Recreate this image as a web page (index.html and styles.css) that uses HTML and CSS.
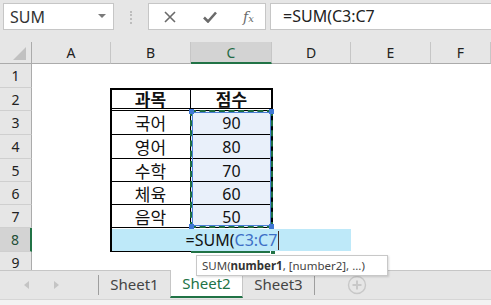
FILE: index.html
```html
<!DOCTYPE html>
<html>
<head>
<meta charset="utf-8">
<link rel="stylesheet" href="styles.css">
</head>
<body>
<div class="app">
  <div class="toolbar">
    <div class="namebox">
      <span class="name">SUM</span>
      <svg class="dd" width="8" height="5" viewBox="0 0 8 5"><path d="M0 0H8L4 4Z" fill="#7a7a7a"/></svg>
    </div>
    <div class="grip"></div>
    <div class="fxbtns">
      <svg width="12" height="12" viewBox="0 0 12 12"><path d="M1 1L11 11M11 1L1 11" stroke="#6a6a6a" stroke-width="1.6" fill="none"/></svg>
      <svg width="14" height="12" viewBox="0 0 14 12"><path d="M1 6.5L5 10.5L13 1.5" stroke="#6a6a6a" stroke-width="2.6" fill="none"/></svg>
      <span class="fx"><i>f</i><span class="x">x</span></span>
    </div>
    <div class="formula">=SUM(C3:C7</div>
  </div>

  <div class="sheet">
    <div class="corner"><span class="tri"></span></div>
    <div class="ch">A</div>
    <div class="ch">B</div>
    <div class="ch sel">C</div>
    <div class="ch">D</div>
    <div class="ch">E</div>
    <div class="ch">F</div>

    <div class="rh r1">1</div>
    <div class="rh r2">2</div>
    <div class="rh r3">3</div>
    <div class="rh r4">4</div>
    <div class="rh r5">5</div>
    <div class="rh r6">6</div>
    <div class="rh r7">7</div>
    <div class="rh r8 sel">8</div>
    <div class="rh r9">9</div>

    <div class="cell b r2 head">과목</div>
    <div class="cell c r2 head">점수</div>
    <div class="cell b r3">국어</div>
    <div class="cell c r3 num">90</div>
    <div class="cell b r4">영어</div>
    <div class="cell c r4 num">80</div>
    <div class="cell b r5">수학</div>
    <div class="cell c r5 num">70</div>
    <div class="cell b r6">체육</div>
    <div class="cell c r6 num">60</div>
    <div class="cell b r7">음악</div>
    <div class="cell c r7 num">50</div>

    <div class="frame"></div>
    <div class="range">
      <span class="h tl"></span><span class="h tr"></span><span class="h bl"></span><span class="h br"></span>
    </div>
    <div class="active"><span class="fill"></span></div>
    <div class="editor"><span class="etext">=SUM(<span class="ref">C3:C7</span></span><span class="caret"></span></div>
    <div class="tip">SUM(<b>number1</b>, [number2], ...)</div>
  </div>

  <div class="tabs">
    <div class="nav">
      <svg width="6" height="8" viewBox="0 0 6 8"><path d="M5 0V8L0 4Z" fill="#c4c4c4"/></svg>
      <svg width="6" height="8" viewBox="0 0 6 8"><path d="M1 0V8L6 4Z" fill="#c4c4c4"/></svg>
    </div>
    <div class="vsep"></div>
    <div class="tab">Sheet1</div>
    <div class="tab on">Sheet2</div>
    <div class="tab">Sheet3</div>
    <div class="vsep"></div>
    <div class="add">
      <svg width="20" height="20" viewBox="0 0 20 20"><circle cx="10" cy="10" r="8.5" fill="none" stroke="#c8c8c8" stroke-width="1.4"/><path d="M10 5.5V14.5M5.5 10H14.5" stroke="#c8c8c8" stroke-width="2"/></svg>
    </div>
  </div>
  <div class="status"><span>참조</span><span>접근성: 조사 필요</span></div>
</div>
</body>
</html>
```
FILE: styles.css
```css
* { box-sizing: border-box; }
html, body { margin: 0; padding: 0; }
body {
  width: 491px;
  height: 305px;
  overflow: hidden;
  background: #fff;
  font-family: "Noto Sans", "Noto Sans CJK KR", sans-serif;
  color: #222;
}
.app { width: 491px; height: 305px; display: flex; flex-direction: column; }

/* toolbar */
.toolbar {
  height: 42px;
  flex: none;
  background: #e6e6e6;
  display: flex;
  align-items: flex-start;
  padding-top: 3px;
}
.namebox {
  margin-left: 3px;
  width: 111px;
  height: 27px;
  background: #fff;
  border: 1px solid #c6c6c6;
  display: flex;
  align-items: center;
  padding-left: 6px;
  padding-right: 7px;
}
.name { font-size: 16px; color: #333; flex: 1; line-height: 1; }
.grip {
  width: 2px;
  height: 13px;
  margin: 8px 16px 0 16px;
  border-left: 2px dotted #bdbdbd;
}
.fxbtns {
  width: 118px;
  height: 27px;
  background: #fff;
  border: 1px solid #c6c6c6;
  display: flex;
  align-items: center;
  padding-left: 15px;
  gap: 27px;
}
.fxbtns svg { display: block; }
.fx {
  font-family: "DejaVu Serif", "Liberation Serif", serif;
  color: #6a6a6a;
  font-size: 14px;
  line-height: 1;
  margin-left: -1px;
}
.fx .x { font-size: 10px; font-style: italic; }
.formula {
  margin-left: 4px;
  flex: 1;
  height: 27px;
  background: #fff;
  border: 1px solid #c6c6c6;
  border-right: none;
  font-size: 16px;
  line-height: 25px;
  padding-left: 12px;
  color: #222;
}

/* sheet grid */
.sheet {
  position: relative;
  flex: none;
  height: 228px;
  display: grid;
  grid-template-columns: 32px 79px 80px 81px 79px 80px 60px;
  grid-template-rows: 22px 24px 23px 24px 24px 23px 23px 23px 24px 18px;
}
.corner {
  background: #e6e6e6;
  border-right: 1px solid #ababab;
  border-bottom: 1px solid #ababab;
  position: relative;
}
.tri {
  position: absolute;
  left: 13px;
  top: 5px;
  width: 0; height: 0;
  border-left: 13px solid transparent;
  border-bottom: 13px solid #c1c1c1;
}
.ch {
  background: #e6e6e6;
  border-right: 1px solid #c6c6c6;
  border-bottom: 1px solid #ababab;
  text-align: center;
  font-size: 14px;
  line-height: 21px;
  color: #222;
}
.ch.sel { background: #d3d3d3; color: #1f6b45; border-bottom: 2px solid #217346; }
.rh {
  grid-column: 1;
  background: #e6e6e6;
  border-right: 1px solid #ababab;
  border-bottom: 1px solid #cfcfcf;
  text-align: center;
  font-size: 14px;
  color: #222;
  display: flex; align-items: center; justify-content: center;
}
.rh.r9 { border-bottom: none; padding-top: 3px; }
.rh.sel { background: #d3d3d3; color: #1f4f37; border-right: 2px solid #217346; }

.r1 { grid-row: 2; } .r2 { grid-row: 3; } .r3 { grid-row: 4; } .r4 { grid-row: 5; }
.r5 { grid-row: 6; } .r6 { grid-row: 7; } .r7 { grid-row: 8; } .r8 { grid-row: 9; } .r9 { grid-row: 10; }

.cell {
  font-size: 17px;
  text-align: center;
  display: flex; align-items: center; justify-content: center;
  border-bottom: 1px solid #000;
  color: #111;
  font-family: "Noto Sans CJK KR", sans-serif;
  line-height: 1;
}
.cell.b { grid-column: 3; border-right: 1px solid #000; }
.cell.c { grid-column: 4; }
.cell.num { background: #e9f0fa; font-family: "Noto Sans", sans-serif; font-size: 16px; padding-top: 1px; }
.cell.head { font-weight: 700; border-bottom: 3px double #000; }

.frame {
  grid-column: 3 / 5;
  grid-row: 3 / 10;
  margin: 0 -1px 0 -1px;
  border: 2px solid #000;
  z-index: 2;
}
.range {
  grid-column: 4;
  grid-row: 4 / 9;
  margin: -1px -1px 0 -1px;
  border: 2px dashed #1d6e42;
  position: relative;
  z-index: 3;
  outline: 1px solid #4a7fd6;
  outline-offset: -3px;
}
.h {
  position: absolute;
  width: 5px; height: 5px;
  background: #3f77d4;
}
.tl { left: -3px; top: -3px; }
.tr { right: -3px; top: -3px; }
.bl { left: -3px; bottom: -3px; }
.br { right: -3px; bottom: -3px; }

.active {
  grid-column: 4;
  grid-row: 9;
  border-bottom: 2px solid #217346;
  margin-bottom: -1px;
  margin-right: -1px;
  position: relative;
  z-index: 3;
}
.fill {
  position: absolute;
  right: -2px; bottom: -3px;
  width: 5px; height: 4px;
  background: #217346;
  border-left: 1px solid #fff;
}
.editor {
  grid-column: 3 / 6;
  grid-row: 9;
  margin: 1px 0 1px 1px;
  background: #bee9f9;
  z-index: 4;
  display: flex; align-items: center; justify-content: center;
  font-size: 16px;
  color: #111;
  padding-left: 2px;
}
.etext { line-height: 1; }
.ref { color: #3d6fc6; }
.caret { width: 1px; height: 19px; background: #4a2a20; margin-left: 1px; }

.tip {
  position: absolute;
  left: 196px;
  top: 213px;
  width: 192px;
  height: 21px;
  background: #fff;
  border: 1px solid #c8c8c8;
  box-shadow: 1px 1px 2px rgba(0,0,0,0.15);
  font-size: 11.5px;
  line-height: 19px;
  padding-left: 5px;
  color: #444;
  white-space: nowrap;
  z-index: 6;
}
.tip b { color: #333; }

/* tabs */
.tabs {
  height: 29px;
  flex: none;
  background: #e6e6e6;
  border-top: 1px solid #c6c6c6;
  display: flex;
  align-items: flex-start;
}
.nav {
  width: 98px;
  display: flex;
  gap: 23px;
  padding-left: 24px;
  padding-top: 10px;
}
.nav svg { display: block; }
.vsep { width: 1px; height: 20px; margin-top: 4px; background: #9e9e9e; }
.tab {
  width: 71px;
  height: 27px;
  text-align: center;
  font-size: 15px;
  line-height: 26px;
  color: #444;
}
.tab.on {
  width: 73px;
  background: #fff;
  color: #217346;
  border-bottom: 2px solid #217346;
  border-left: 1px solid #c6c6c6;
  border-right: 1px solid #c6c6c6;
  margin-top: -1px;
  height: 28px;
}
.add { margin-left: 32px; margin-top: 4px; }
.add svg { display: block; }

.status {
  flex: 1;
  background: #f3f3f3;
  border-top: 1px solid #d6d6d6;
  font-size: 12px;
  color: #555;
  padding-left: 10px;
  display: flex;
  gap: 40px;
  line-height: 1;
  padding-top: 6px;
  overflow: hidden;
}
```
